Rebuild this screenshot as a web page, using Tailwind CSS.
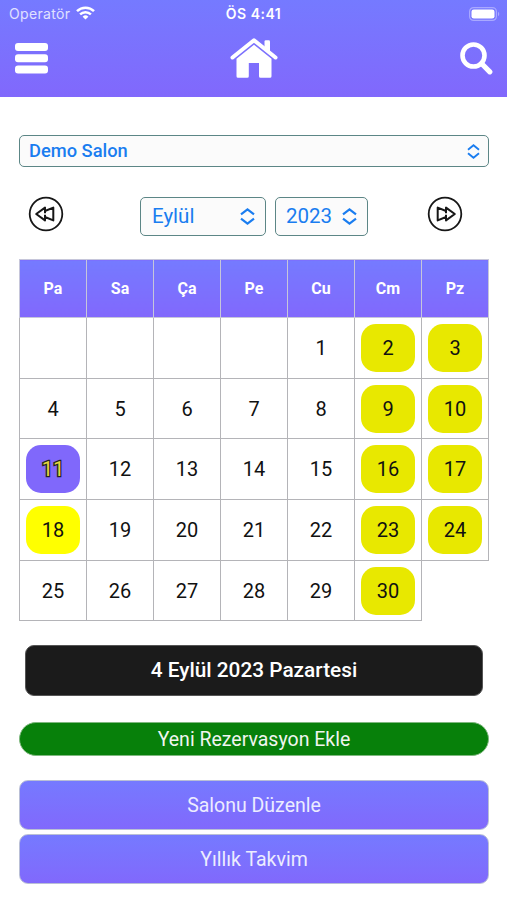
<!DOCTYPE html>
<html lang="tr">
<head>
  <meta charset="UTF-8">
  <meta name="viewport" content="width=device-width, initial-scale=1.0">
  <title>Demo Salon</title>
  <script src="https://cdn.jsdelivr.net/npm/@tailwindcss/browser@4"></script>
</head>
<body class="bg-white font-[Roboto,sans-serif] text-[#111] h-[900px] overflow-hidden">
  <!-- Header -->
  <header class="h-[97px] bg-linear-to-b from-[#757aff] to-[#8168fc] text-white">
    <div class="h-[27px] grid grid-cols-3 items-center pl-[9px] pr-[7px] font-[Inter,sans-serif] text-sm">
      <div class="flex items-center gap-[6px] text-[#e0e1ff]">
        <span class="tracking-[0.35px]">Operatör</span>
        <svg class="w-[19px] h-[14px] mb-px" viewBox="0 0 19 14" fill="none" stroke="#fff" stroke-width="2.5">
          <path d="M1 5.1a12.2 12.2 0 0 1 17 0" />
          <path d="M4.1 8.3a7.8 7.8 0 0 1 10.8 0" />
          <path d="M9.5 13.6 6.6 10.7a4.2 4.2 0 0 1 5.8 0z" fill="#fff" stroke="none" />
        </svg>
      </div>
      <span class="pr-[2px] pt-px text-center text-[14px] font-semibold tracking-[0.5px]">ÖS 4:41</span>
      <svg class="justify-self-end w-[31px] h-[14px]" viewBox="0 0 31 14">
        <rect x=".6" y=".6" width="26.8" height="12.8" rx="4" fill="none" stroke="#a9a9ff" stroke-width="1.2" />
        <rect x="2.5" y="2.4" width="23" height="9.2" rx="2.4" fill="#fff" />
        <path d="M29 4.8c1.7.8 1.7 3.6 0 4.4z" fill="#a9a9ff" />
      </svg>
    </div>
    <div class="h-[62px] flex items-center justify-between pl-[15px] pr-[14px]">
      <button class="w-[60px]">
        <svg class="w-[33px] h-[31px]" viewBox="0 0 33 31" fill="#fff">
          <rect x="0" y="0" width="33" height="8" rx="3" />
          <rect x="0" y="11.3" width="33" height="8" rx="3" />
          <rect x="0" y="22.6" width="33" height="8" rx="3" />
        </svg>
      </button>
      <svg class="w-[48px] h-[42px]" viewBox="0 0 48 42" fill="#fff">
        <path d="M2.5 20.500 24 3.300l21.500 17.200" fill="none" stroke="#fff" stroke-width="4" stroke-linecap="round" stroke-linejoin="round" />
        <path d="M34.500 4.500q0-1.300 1.300-1.300h2.900q1.300 0 1.300 1.300v11.500l-5.500-4.400z" />
        <path d="M24 7.800 41.500 21.800V39.200q0 1.500-1.500 1.500H30.500q-1.500 0-1.500-1.500V26H18.800v13.200q0 1.500-1.500 1.500H8q-1.500 0-1.500-1.500V21.800z" />
      </svg>
      <button class="w-[60px] flex justify-end">
        <svg class="w-[34px] h-[34px]" viewBox="0 0 34 34" fill="none" stroke="#fff">
          <circle cx="14.500" cy="14.500" r="11" stroke-width="4.600" />
          <path d="m22.500 22.500 8.300 8.300" stroke-width="5.200" stroke-linecap="round" />
        </svg>
      </button>
    </div>
  </header>

  <main class="pl-[19px] pr-[18px] pt-[38px]">
    <!-- Salon -->
    <div class="h-8 flex items-center justify-between rounded-[5px] border-[1.500px] border-[#5c8686] bg-[#fbfbfb] pl-[9px] pr-2 text-[#1a7df0]">
      <span class="text-[18.300px] font-medium leading-none pt-px">Demo Salon</span>
      <svg class="w-[13px] h-[15px]" viewBox="0 0 13 15" fill="none" stroke="currentColor" stroke-width="1.900">
        <path d="M1 5.700 6.500 1.300 12 5.700M1 9.300l5.500 4.400L12 9.300" />
      </svg>
    </div>

    <!-- Month and year -->
    <div class="mt-[30px] h-[39px] flex items-center text-[20.500px] leading-none text-[#1a7df0]">
      <svg class="ml-[9px] mb-[5px] w-[36px] h-[36px]" viewBox="0 0 36 36" fill="none" stroke="#171717" stroke-linejoin="round">
        <circle cx="18" cy="18" r="16.300" stroke-width="1.800" />
        <path d="M8.200 18 17 11.600v3.400L25.300 11.600v12.800L17 21v3.400zM17 15v2.200M17 18.800V21" stroke-width="2" />
      </svg>
      <div class="ml-[76px] w-[126px] h-full flex items-center justify-between rounded-[5px] border-[1.500px] border-[#5c8686] bg-[#fbfbfb] pl-[11px] pr-[10px]">
        <span class="pb-px">Eylül</span>
        <svg class="w-[15px] h-[17px]" viewBox="0 0 15 17" fill="none" stroke="currentColor" stroke-width="2.200">
          <path d="m1 6.300 6.500-4.900L14 6.300M1 10.700l6.500 4.900 6.500-4.900" />
        </svg>
      </div>
      <div class="ml-[9px] w-[93px] h-full flex items-center justify-between rounded-[5px] border-[1.500px] border-[#5c8686] bg-[#fbfbfb] pl-[10px] pr-[10px]">
        <span class="pb-px">2023</span>
        <svg class="w-[15px] h-[17px]" viewBox="0 0 15 17" fill="none" stroke="currentColor" stroke-width="2.200">
          <path d="m1 6.300 6.500-4.900L14 6.300M1 10.700l6.500 4.900 6.500-4.900" />
        </svg>
      </div>
      <svg class="ml-[59px] mb-[5px] w-[36px] h-[36px] -scale-x-100" viewBox="0 0 36 36" fill="none" stroke="#171717" stroke-linejoin="round">
        <circle cx="18" cy="18" r="16.300" stroke-width="1.800" />
        <path d="M8.200 18 17 11.600v3.400L25.300 11.600v12.800L17 21v3.400zM17 15v2.200M17 18.800V21" stroke-width="2" />
      </svg>
    </div>

    <!-- Calendar -->
    <table class="mt-[23px] w-[470px] table-fixed border-collapse">
      <thead>
        <tr class="h-[58px] text-base text-white">
          <th class="border border-[#c6c6da] bg-linear-to-b from-[#757aff] to-[#8168fc] p-0 font-bold">Pa</th>
          <th class="border border-[#c6c6da] bg-linear-to-b from-[#757aff] to-[#8168fc] p-0 font-bold">Sa</th>
          <th class="border border-[#c6c6da] bg-linear-to-b from-[#757aff] to-[#8168fc] p-0 font-bold">Ça</th>
          <th class="border border-[#c6c6da] bg-linear-to-b from-[#757aff] to-[#8168fc] p-0 font-bold">Pe</th>
          <th class="border border-[#c6c6da] bg-linear-to-b from-[#757aff] to-[#8168fc] p-0 font-bold">Cu</th>
          <th class="border border-[#c6c6da] bg-linear-to-b from-[#757aff] to-[#8168fc] p-0 font-bold">Cm</th>
          <th class="border border-[#c6c6da] bg-linear-to-b from-[#757aff] to-[#8168fc] p-0 font-bold">Pz</th>
        </tr>
      </thead>
      <tbody id="days"></tbody>
    </table>

    <!-- Selected day -->
    <div class="mt-6 mx-[6px] h-[51px] flex items-center justify-center rounded-[9px] border border-[#555] bg-[#1b1b1b] pt-px text-[20.800px] font-medium text-white">4 Eylül 2023 Pazartesi</div>

    <!-- Actions -->
    <button class="mt-[26px] w-full h-[34px] flex items-center justify-center rounded-full border border-[#7fb87f] bg-[#07800a] pt-[2px] text-[19.500px] text-[#f0f5f0]">Yeni Rezervasyon Ekle</button>
    <button class="mt-6 w-full h-[50px] flex items-center justify-center rounded-[9px] border-[1.500px] border-[#b9bfd6] bg-linear-to-b from-[#757aff] to-[#8168fc] bg-origin-border pt-[2px] text-[19.500px] text-[#ececff]">Salonu Düzenle</button>
    <button class="mt-1 w-full h-[50px] flex items-center justify-center rounded-[9px] border-[1.500px] border-[#b9bfd6] bg-linear-to-b from-[#757aff] to-[#8168fc] bg-origin-border pt-[2px] text-[19.500px] text-[#ececff]">Yıllık Takvim</button>
  </main>

  <script>
    const firstDay = 4; // 1 September 2023 is a Friday
    const dayCount = 30;
    const today = 11;
    const booked = 18;

    function pillClass(day, column) {
      const base = "mx-auto w-[54px] h-12 flex items-center justify-center rounded-[15px] ";
      if (day === today) return base + "bg-[#8068fb] text-[#e6d83c] [-webkit-text-stroke:2.500px_#222] [paint-order:stroke_fill]";
      if (day === booked) return base + "bg-[#ffff00]";
      if (column > 4) return base + "bg-[#e8e800]";
      return base;
    }

    let html = "";
    for (let start = 0; start < firstDay + dayCount; start += 7) {
      html += `<tr class="h-[61px] nth-[2]:h-[60px] last:h-[60px] text-[20px]">`;
      for (let column = 0; column < 7; column++) {
        const day = start + column - firstDay + 1;
        if (day > dayCount) break;
        html += `<td class="border border-[#b4b4b8] p-0">`;
        if (day > 0) html += `<div class="${pillClass(day, column)}">${day}</div>`;
        html += `</td>`;
      }
      html += `</tr>`;
    }
    document.getElementById("days").innerHTML = html;
  </script>
</body>
</html>
